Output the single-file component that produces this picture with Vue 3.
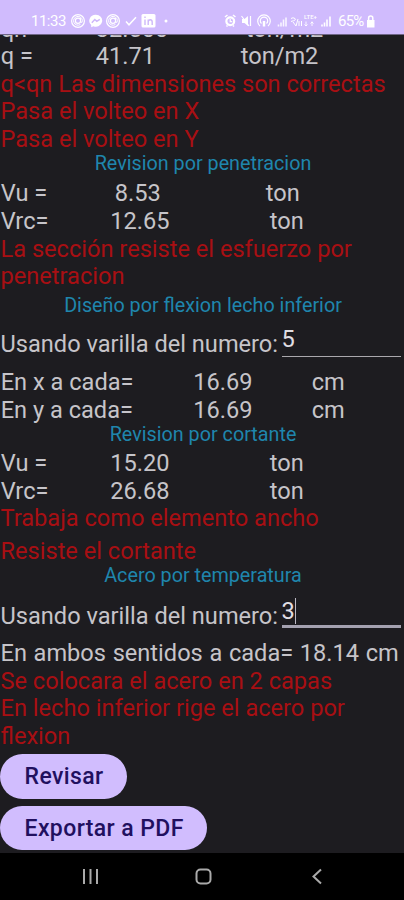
<script setup>
const blocks = [
  { type: 'row', cells: ['qn =', '32.500', 'ton/m2'], cols: [95, 150] },
  { type: 'row', cells: ['q =', '41.71', 'ton/m2'], cols: [95, 145] },
  { type: 'note', lines: ['q<qn Las dimensiones son correctas', 'Pasa el volteo en X', 'Pasa el volteo en Y'] },
  { type: 'title', text: 'Revision por penetracion' },
  { type: 'row', cells: ['Vu =', '8.53', 'ton'], cols: [114, 151] },
  { type: 'row', cells: ['Vrc=', '12.65', 'ton'], cols: [109.5, 159.5] },
  { type: 'note', lines: ['La sección resiste el esfuerzo por', 'penetracion'] },
  { type: 'title', text: 'Diseño por flexion lecho inferior', gap: true },
  { type: 'field', value: '5' },
  { type: 'row', cells: ['En x a cada=', '16.69', 'cm'], cols: [192.5, 118.5] },
  { type: 'row', cells: ['En y a cada=', '16.69', 'cm'], cols: [192.5, 118.5] },
  { type: 'title', text: 'Revision por cortante', tight: true },
  { type: 'row', cells: ['Vu =', '15.20', 'ton'], cols: [109.5, 159.5] },
  { type: 'row', cells: ['Vrc=', '26.68', 'ton'], cols: [109.5, 159.5] },
  { type: 'note', lines: ['Trabaja como elemento ancho'] },
  { type: 'note', lines: ['Resiste el cortante'], spaced: true },
  { type: 'title', text: 'Acero por temperatura', tight: true },
  { type: 'field', value: '3', focused: true },
  { type: 'sum', text: 'En ambos sentidos a cada= 18.14 cm' },
  { type: 'note', lines: ['Se colocara el acero en 2 capas', 'En lecho inferior rige el acero por', 'flexion'] },
]
</script>

<template>
  <div class="screen">
    <header class="status">
      <span class="clock">11:33</span>
      <svg class="left-icons" width="100" height="16" viewBox="0 0 100 16" fill="none" stroke="#fff" stroke-width="1.2">
        <g v-for="x in [8, 43]" :key="x">
          <circle :cx="x" cy="8" r="6.4" />
          <circle :cx="x" cy="7.8" r="2.6" />
          <path :d="`M${x + 2.6} 5v4q1.8 1.6 1.8-1.5a4.4 4.4 0 1 0-2 4`" stroke-width="1" />
        </g>
        <path d="M25.700 1.700a6.300 6 0 0 0-4.500 10.300v2.200l2.200-1a6.300 6 0 1 0 2.300-11.500z" fill="#fff" stroke="none" />
        <path d="M21.800 9.700l3-3.200 2 1.800 3-2" stroke="#ceb8fa" stroke-width="1.500" />
        <path d="M56 8.500l3 3.300 7-7.500" stroke-width="1.500" />
        <rect x="71.500" y="1" width="14" height="13.500" rx="1.500" fill="#fff" stroke="none" />
        <path d="M75 6.500v5.500M75 3.500v1.500M78.200 6.500v5.500M78.200 9q0-2.200 2-2.200t2 2.200v3" stroke="#ceb8fa" stroke-width="1.400" />
        <circle cx="96" cy="8" r="1.500" fill="#fff" stroke="none" />
      </svg>
      <svg class="right-icons" width="111" height="16" viewBox="0 0 111 16" fill="none" stroke="#fff" stroke-width="1.200">
        <path d="M1 4l2.500-2M11.500 4L9 2M2.500 13.500l1-1M10 13.500l-1-1" stroke-width="1.600" />
        <circle cx="6.250" cy="8.300" r="3.900" stroke-width="2.200" />
        <path d="M6.250 6v2.600h2" />
        <path d="M18 6h2.500L24 3v10l-3.500-3H18z" fill="#fff" stroke="none" />
        <path d="M17.500 3l7.500 10M26.500 3v10" />
        <path d="M36 13a6.300 6.300 0 1 1 8 0M37.500 10.500a3.700 3.700 0 1 1 5 0" />
        <path d="M40 8v5.500" stroke-width="2.500" />
        <g stroke-width="1.600">
          <path d="M54.500 13.500v-2M57 13.500v-4M59.500 13.500v-7M62 13.500v-9" opacity=".85" />
          <path d="M98 13.500v-2M100.500 13.500v-4M103 13.500v-7M106 13.500v-10" />
        </g>
        <path d="M67 5.500q2-1.500 4 0t-4 3M69 9l3 4 2-7M75 8v5M77.500 8v5" stroke-width="1" />
        <text x="80" y="6" class="lte">LTE+</text>
        <path d="M82 8.500v4.500M80.500 11.500l1.500 1.500 1.500-1.500M88 13V8.500M86.500 10.500L88 9l1.500 1.500" stroke-width=".9" />
      </svg>
      <span class="percent">65%</span>
      <svg class="battery" width="9" height="13" viewBox="0 0 9 13">
        <path d="M1 5h7.500v7.500H1z" fill="#fff" />
        <path d="M2.600 5V3.200a2.100 2.100 0 0 1 4.200 0V5" fill="none" stroke="#fff" stroke-width="1.500" />
      </svg>
    </header>

    <main class="content">
      <template v-for="(b, i) in blocks" :key="i">
        <div v-if="b.type === 'row'" class="row" :style="{ gridTemplateColumns: `${b.cols[0]}px ${b.cols[1]}px 1fr` }">
          <span v-for="(c, k) in b.cells" :key="k">{{ c }}</span>
        </div>
        <div v-else-if="b.type === 'note'" class="note" :class="{ spaced: b.spaced }">
          <div v-for="l in b.lines" :key="l" class="line">{{ l }}</div>
        </div>
        <h2 v-else-if="b.type === 'title'" class="title" :class="{ gap: b.gap, tight: b.tight }">{{ b.text }}</h2>
        <div v-else-if="b.type === 'field'" class="field" :class="{ active: b.focused }">
          <span class="label">Usando varilla del numero:</span>
          <div class="input" :class="{ focused: b.focused }">
            <span class="digit">{{ b.value }}</span><i v-if="b.focused" class="caret"></i>
          </div>
        </div>
        <div v-else class="sum">{{ b.text }}</div>
      </template>
      <div class="actions">
        <button>Revisar</button>
        <button>Exportar a PDF</button>
      </div>
    </main>

    <nav class="nav">
      <svg width="404" height="47" viewBox="0 0 404 47" fill="none" stroke="#aaa">
        <path d="M84 16v15M90.500 16v15M97 16v15" stroke-width="2" />
        <rect x="196.500" y="16.500" width="14" height="14" rx="4" stroke-width="2" />
        <path d="M321 16.500l-7.500 7 7.500 7" stroke-width="2" />
      </svg>
    </nav>
  </div>
</template>

<style>
body {
  margin: 0;
  background: #1d1c20;
}
</style>

<style scoped>
.screen {
  width: 404px;
  height: 900px;
  overflow: hidden;
  display: flex;
  flex-direction: column;
  background: #1d1c20;
  color: #c6c4c9;
  font-family: Roboto, "Liberation Sans", sans-serif;
}
.status {
  flex: none;
  height: 35px;
  box-sizing: border-box;
  padding: 8px 0 0 31px;
  display: flex;
  align-items: center;
  background: #d0bbfd;
  border-bottom: 1px solid #6f6587;
  color: #fff;
  font-size: 15px;
  z-index: 1;
}
.clock {
  width: 39px;
  letter-spacing: -0.5px;
}
.left-icons {
  flex: none;
}
.right-icons {
  flex: none;
  margin-left: 54px;
}
.lte {
  font-size: 6px;
  font-weight: 500;
  fill: #fff;
  stroke: none;
}
.percent {
  margin-left: 3px;
  width: 28px;
  letter-spacing: -0.8px;
  white-space: nowrap;
}
.battery {
  flex: none;
}
.content {
  flex: 1;
  min-height: 0;
  margin-top: -19.5px;
  font-size: 23.6px;
  line-height: 27.6px;
  white-space: nowrap;
}
.row {
  display: grid;
  height: 27.6px;
  padding-left: 0.7px;
}
.note,
.sum {
  padding-left: 0.5px;
}
.note {
  color: #a80f13;
}
.note.spaced {
  padding-top: 4.5px;
}
.sum {
  word-spacing: 0.8px;
}
.title {
  margin: 0;
  height: 27px;
  line-height: 22.5px;
  color: #1f86ad;
  font-size: 19.75px;
  font-weight: 400;
  text-align: center;
  padding-left: 2px;
}
.title.gap {
  padding-top: 4px;
  height: 22px;
}
.title.tight {
  height: 26px;
  line-height: 21.5px;
}
.field {
  height: 52.2px;
  display: flex;
  align-items: flex-start;
}
.field.active {
  height: 51.5px;
  margin-top: -2.7px;
}
.label {
  width: 281.5px;
  padding: 14.5px 0 0 0.5px;
  box-sizing: border-box;
}
.input {
  width: 119px;
  height: 40px;
  box-sizing: border-box;
  padding-top: 9.2px;
  border-bottom: 1px solid #aaa8ad;
  color: #e0dee3;
  display: flex;
}
.input.focused {
  border-bottom: 3px solid #a4a1b0;
}
.caret {
  width: 1.5px;
  height: 26px;
  background: #bbb8c4;
}
.actions {
  display: flex;
  flex-direction: column;
  align-items: flex-start;
  gap: 7px;
  padding-top: 4px;
}
button {
  height: 44.5px;
  padding: 0 23.5px 0 24.5px;
  border: 0;
  border-radius: 23px;
  background: #d1bdfe;
  color: #21105f;
  font: 500 23px/45px Roboto, "Liberation Sans", sans-serif;
  letter-spacing: 0.4px;
}
.nav {
  flex: none;
  height: 47px;
  background: #000;
}
.nav svg {
  display: block;
}
</style>
